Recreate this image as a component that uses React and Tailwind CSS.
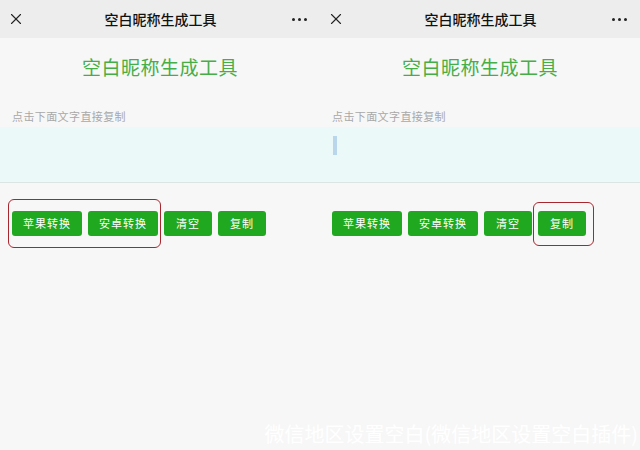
import { X } from "lucide-react"

const font = { fontFamily: '"Noto Sans CJK SC", "Noto Sans", sans-serif' }

function Panel({ cursor, mark }) {
  return (
    <div className="relative flex h-[450px] w-[320px] flex-col bg-[#f7f7f7]" style={font}>
      <div className="flex h-[38px] items-center justify-between bg-[#ededed] pl-[7px] pr-[9px]">
        <X size={18} strokeWidth={1.5} className="text-[#222]" />
        <div className="pl-[4px] text-[14px] font-medium text-[#111]">空白昵称生成工具</div>
        <div className="flex gap-[3px] pr-[4px]">
          <span className="h-[3px] w-[3px] rounded-full bg-[#222]" />
          <span className="h-[3px] w-[3px] rounded-full bg-[#222]" />
          <span className="h-[3px] w-[3px] rounded-full bg-[#222]" />
        </div>
      </div>
      <h1 className="pt-[18px] text-center text-[19px] leading-[22px] tracking-[0.5px] text-[#46ae46]">空白昵称生成工具</h1>
      <p className="mt-[32px] pl-[12px] text-[11px] leading-[12px] tracking-[0.4px] text-[#a8a8a8]">点击下面文字直接复制</p>
      <div className="mt-[5px] h-[56px] border-b border-[#dde4e4] bg-[#ebf9f8] px-[13px] pt-[9px]">
        {cursor && <div className="h-[19px] w-[4px] bg-[#b9d6ea]" />}
      </div>
      <div className="mt-[28px] flex gap-[6px] pl-[12px] text-[11px] tracking-[1px] text-white">
        <button className="h-[25px] w-[70px] rounded-[3px] bg-[#21a821]">苹果转换</button>
        <button className="h-[25px] w-[70px] rounded-[3px] bg-[#21a821]">安卓转换</button>
        <button className="h-[25px] w-[48px] rounded-[3px] bg-[#21a821]">清空</button>
        <button className="h-[25px] w-[48px] rounded-[3px] bg-[#21a821]">复制</button>
      </div>
      {mark === "left" && (
        <div className="absolute left-[8px] top-[199px] h-[49px] w-[153px] rounded-[6px] border-[1.5px] border-[#a8262e]" />
      )}
      {mark === "right" && (
        <div className="absolute left-[213px] top-[202px] h-[44px] w-[61px] rounded-[6px] border-[1.5px] border-[#a8262e]" />
      )}
    </div>
  )
}

export default function App() {
  return (
    <div className="relative flex h-[450px] w-[640px] overflow-hidden">
      <Panel mark="left" />
      <Panel cursor mark="right" />
      <div
        className="absolute bottom-[3px] right-[2px] text-[20px] leading-[26px] text-white"
        style={font}
      >
        微信地区设置空白(微信地区设置空白插件)
      </div>
    </div>
  )
}
